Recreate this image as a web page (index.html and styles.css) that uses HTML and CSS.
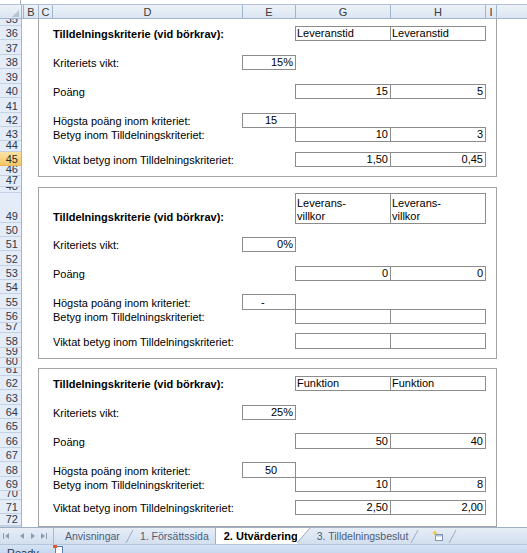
FILE: index.html
```html
<!DOCTYPE html>
<html lang="sv">
<head>
<meta charset="utf-8">
<title>2. Utvärdering</title>
<link rel="stylesheet" href="styles.css">
</head>
<body>
<div class="app">
  <div class="topstrip"><div class="namebox"></div></div>

  <div class="colheads">
    <div class="ch corner"><svg class="selall" width="7" height="7" viewBox="0 0 7 7"><polygon points="7,0 7,7 0,7" fill="#b7c3d3"/></svg></div>
    <div class="ch hid"></div>
    <div class="ch">B</div>
    <div class="ch sep">C</div>
    <div class="ch sep">D</div>
    <div class="ch sep">E</div>
    <div class="ch sep">G</div>
    <div class="ch sep">H</div>
    <div class="ch sep">I</div>
    <div class="ch sep"></div>
  </div>

  <div class="sheet">
    <div class="rowheads">
      <div class="rh h7">35</div>
      <div class="rh h14">36</div>
      <div class="rh h15">37</div>
      <div class="rh h14">38</div>
      <div class="rh h15">39</div>
      <div class="rh h14">40</div>
      <div class="rh h15">41</div>
      <div class="rh h14">42</div>
      <div class="rh h14">43</div>
      <div class="rh h11">44</div>
      <div class="rh h14 sel">45</div>
      <div class="rh h10">46</div>
      <div class="rh h11">47</div>
      <div class="rh h6">48</div>
      <div class="rh h30">49</div>
      <div class="rh h14">50</div>
      <div class="rh h14">51</div>
      <div class="rh h15">52</div>
      <div class="rh h14">53</div>
      <div class="rh h14">54</div>
      <div class="rh h15">55</div>
      <div class="rh h14">56</div>
      <div class="rh h10">57</div>
      <div class="rh h15">58</div>
      <div class="rh h10">59</div>
      <div class="rh h10">60</div>
      <div class="rh h8">61</div>
      <div class="rh h14">62</div>
      <div class="rh h15">63</div>
      <div class="rh h14">64</div>
      <div class="rh h14">65</div>
      <div class="rh h15">66</div>
      <div class="rh h14">67</div>
      <div class="rh h15">68</div>
      <div class="rh h14">69</div>
      <div class="rh h9">70</div>
      <div class="rh h14">71</div>
      <div class="rh h12">72</div>
      <div class="rh h1">73</div>
    </div>

    <div class="canvas">
      <section class="card cut">
        <div class="r h7"></div>
        <div class="r h14">
          <div class="lbl bold">Tilldelningskriterie (vid börkrav):</div>
          <div class="box cg">Leveranstid</div>
          <div class="box chh">Leveranstid</div>
        </div>
        <div class="r h15"></div>
        <div class="r h14">
          <div class="lbl">Kriteriets vikt:</div>
          <div class="box ce num">15%</div>
        </div>
        <div class="r h15"></div>
        <div class="r h14">
          <div class="lbl">Poäng</div>
          <div class="box cg num">15</div>
          <div class="box chh num">5</div>
        </div>
        <div class="r h15"></div>
        <div class="r h14">
          <div class="lbl">Högsta poäng inom kriteriet:</div>
          <div class="box ce ind">15</div>
        </div>
        <div class="r h14">
          <div class="lbl">Betyg inom Tilldelningskriteriet:</div>
          <div class="box cg num">10</div>
          <div class="box chh num">3</div>
        </div>
        <div class="r h11"></div>
        <div class="r h14">
          <div class="lbl">Viktat betyg inom Tilldelningskriteriet:</div>
          <div class="box cg num">1,50</div>
          <div class="box chh num">0,45</div>
        </div>
        <div class="r h10"></div>
      </section>

      <section class="card gap10">
        <div class="r h5"></div>
        <div class="r h30">
          <div class="lbl bold">Tilldelningskriterie (vid börkrav):</div>
          <div class="box cg wrap"><span>Leverans-<br>villkor</span></div>
          <div class="box chh wrap"><span>Leverans-<br>villkor</span></div>
        </div>
        <div class="r h14"></div>
        <div class="r h14">
          <div class="lbl">Kriteriets vikt:</div>
          <div class="box ce num">0%</div>
        </div>
        <div class="r h15"></div>
        <div class="r h14">
          <div class="lbl">Poäng</div>
          <div class="box cg num">0</div>
          <div class="box chh num">0</div>
        </div>
        <div class="r h14"></div>
        <div class="r h15">
          <div class="lbl">Högsta poäng inom kriteriet:</div>
          <div class="box ce dash">-</div>
        </div>
        <div class="r h14">
          <div class="lbl">Betyg inom Tilldelningskriteriet:</div>
          <div class="box cg"></div>
          <div class="box chh"></div>
        </div>
        <div class="r h10"></div>
        <div class="r h15">
          <div class="lbl">Viktat betyg inom Tilldelningskriteriet:</div>
          <div class="box cg"></div>
          <div class="box chh"></div>
        </div>
        <div class="r h10"></div>
      </section>

      <section class="card gap9">
        <div class="r h7"></div>
        <div class="r h14">
          <div class="lbl bold">Tilldelningskriterie (vid börkrav):</div>
          <div class="box cg">Funktion</div>
          <div class="box chh">Funktion</div>
        </div>
        <div class="r h15"></div>
        <div class="r h14">
          <div class="lbl">Kriteriets vikt:</div>
          <div class="box ce num">25%</div>
        </div>
        <div class="r h14"></div>
        <div class="r h15">
          <div class="lbl">Poäng</div>
          <div class="box cg num">50</div>
          <div class="box chh num">40</div>
        </div>
        <div class="r h14"></div>
        <div class="r h15">
          <div class="lbl">Högsta poäng inom kriteriet:</div>
          <div class="box ce ind">50</div>
        </div>
        <div class="r h14">
          <div class="lbl">Betyg inom Tilldelningskriteriet:</div>
          <div class="box cg num">10</div>
          <div class="box chh num">8</div>
        </div>
        <div class="r h9"></div>
        <div class="r h14">
          <div class="lbl">Viktat betyg inom Tilldelningskriteriet:</div>
          <div class="box cg num">2,50</div>
          <div class="box chh num">2,00</div>
        </div>
        <div class="r h12"></div>
      </section>
    </div>
  </div>

  <div class="tabbar">
    <div class="nav">
      <svg width="53" height="16" viewBox="0 0 53 16">
        <g fill="#8d9bb0">
          <rect x="3" y="5" width="1" height="6"/>
          <polygon points="5,8 9,5 9,11"/>
          <polygon points="20,8 24,5 24,11"/>
          <polygon points="31,5 31,11 35,8"/>
          <polygon points="41,5 41,11 45,8"/>
          <rect x="46" y="5" width="1" height="6"/>
        </g>
      </svg>
    </div>
    <div class="tab t1">Anvisningar</div>
    <svg class="slash" width="10" height="16" viewBox="0 0 10 16"><line x1="1" y1="15" x2="8" y2="2" stroke="#9aabc2" stroke-width="1"/></svg>
    <div class="tab t2">1. Försättssida</div>
    <div class="tab active">2. Utvärdering</div>
    <svg class="slash-active" width="13" height="16" viewBox="0 0 13 16"><polygon points="0,0 13,0 0,15" fill="#fff"/><line x1="0" y1="15" x2="13" y2="0" stroke="#9aabc2" stroke-width="1"/></svg>
    <div class="tab t4">3. Tilldelningsbeslut</div>
    <svg class="slash" width="10" height="16" viewBox="0 0 10 16"><line x1="1" y1="15" x2="8" y2="2" stroke="#9aabc2" stroke-width="1"/></svg>
    <div class="tab tnew">
      <svg width="11" height="12" viewBox="0 0 11 12">
        <rect x="3.5" y="4.5" width="7" height="6" fill="#fff" stroke="#7f95b8"/>
        <rect x="4" y="5" width="6" height="1.5" fill="#a9bedc"/>
        <polygon points="3,0 3.8,2.2 6,3 3.8,3.8 3,6 2.2,3.8 0,3 2.2,2.2" fill="#f2c230"/>
      </svg>
    </div>
    <svg class="slash" width="10" height="16" viewBox="0 0 10 16"><line x1="1" y1="15" x2="8" y2="2" stroke="#9aabc2" stroke-width="1"/></svg>
  </div>

  <div class="status">
    <span class="ready">Ready</span>
    <svg class="macro" width="12" height="8" viewBox="0 0 12 8">
      <rect x="3.5" y="1.5" width="7" height="7" fill="#fff" stroke="#5a7fb5"/>
      <rect x="1" y="0" width="4" height="3" fill="#e0582c"/>
    </svg>
  </div>
</div>
</body>
</html>
```
FILE: styles.css
```css
* {
  box-sizing: border-box;
}

html,
body {
  margin: 0;
  padding: 0;
}

body {
  width: 527px;
  height: 553px;
  overflow: hidden;
  background: #fff;
  color: #000;
  font-family: "Liberation Sans", Arial, sans-serif;
  font-size: 11px;
}

.app {
  width: 527px;
  height: 553px;
  display: flex;
  flex-direction: column;
}

/* ---------- top strip (bottom of formula bar) ---------- */
.topstrip {
  height: 5px;
  flex: none;
  display: flex;
  background: #fff;
  border-bottom: 1px solid #b3c2d6;
}

.namebox {
  width: 21px;
  height: 4px;
  border-right: 1px solid #a4b1c2;
}

/* ---------- column headers ---------- */
.colheads {
  height: 14px;
  flex: none;
  display: grid;
  grid-template-columns: 22px 2px 14px 14px 190px 53px 95px 95px 11px 1fr;
  background: linear-gradient(#edf2f9, #dbe5f1);
  border-bottom: 1px solid #9eb6ce;
}

.ch {
  padding-top: 1px;
  line-height: 12px;
  text-align: center;
  color: #3a3a3a;
  overflow: hidden;
}

.ch.sep {
  border-left: 1px solid #9eb6ce;
}

.corner {
  border-right: 1px solid #9eb6ce;
  display: flex;
  justify-content: flex-end;
  align-items: flex-end;
  padding: 0 2px 1px 0;
}

.hid {
  border-right: 1px solid #9eb6ce;
}

/* ---------- sheet ---------- */
.sheet {
  height: 508px;
  flex: none;
  display: flex;
  overflow: hidden;
}

.rowheads {
  width: 22px;
  flex: none;
  display: flex;
  flex-direction: column;
  background: #e4ecf7;
  border-right: 1px solid #9eb6ce;
}

.rh {
  flex: none;
  display: flex;
  align-items: flex-end;
  justify-content: flex-end;
  padding-right: 3px;
  line-height: 12px;
  color: #30394a;
  border-bottom: 1px solid #c3d1e3;
  overflow: hidden;
}

.rh.sel {
  background: linear-gradient(#fbe3a4, #f4c766);
  border-bottom-color: #e8b75a;
  color: #2e2e2e;
}

.h1 { height: 1px; }
.h5 { height: 5px; }
.h6 { height: 6px; }
.h7 { height: 7px; }
.h8 { height: 8px; }
.h9 { height: 9px; }
.h10 { height: 10px; }
.h11 { height: 11px; }
.h12 { height: 12px; }
.h14 { height: 14px; }
.h15 { height: 15px; }
.h30 { height: 30px; }

.canvas {
  flex: 1;
  padding-left: 16px;
}

/* ---------- criterion cards ---------- */
.card {
  width: 459px;
  border: 1px solid #a3a3a3;
  padding: 0 11px 0 13px;
}

.card.cut {
  border-top: none;
}

.gap10 {
  margin-top: 10px;
}

.gap9 {
  margin-top: 9px;
}

.r {
  display: grid;
  grid-template-columns: 190px 53px 95px 95px;
}

.lbl {
  grid-row: 1;
  grid-column: 1;
  align-self: end;
  padding-left: 1px;
  line-height: 12px;
  white-space: nowrap;
}

.bold {
  font-weight: bold;
}

.box {
  grid-row: 1;
  margin: 0 -1px -1px 0;
  border: 1px solid #8c8c8c;
  display: flex;
  align-items: flex-end;
  padding: 0 2px 0 1px;
  line-height: 13px;
  white-space: nowrap;
  overflow: hidden;
}

.box.num {
  justify-content: flex-end;
}

.box.ind {
  padding-left: 22px;
}

.box.dash {
  padding-left: 18px;
}

.box.wrap {
  white-space: normal;
}

.ce { grid-column: 2; }
.cg { grid-column: 3; }
.chh { grid-column: 4; }

/* ---------- sheet tabs ---------- */
.tabbar {
  height: 17px;
  flex: none;
  display: flex;
  align-items: stretch;
  background: linear-gradient(#e6edf7, #d3dfee);
  border-top: 1px solid #9eb0c8;
}

.nav {
  width: 54px;
  flex: none;
  border-right: 1px solid #a9b9cf;
}

.nav svg {
  display: block;
}

.tab {
  flex: none;
  display: flex;
  align-items: center;
  line-height: 16px;
  font-size: 10.5px;
  color: #4d5d77;
  white-space: nowrap;
}

.slash,
.slash-active {
  flex: none;
  display: block;
}

.t1 {
  padding: 0 5px 0 11px;
}

.t2 {
  padding: 0 6px 0 5px;
}

.active {
  padding-left: 8px;
  background: #fff;
  border-left: 1px solid #9eb0c8;
  font-size: 11px;
  font-weight: bold;
  color: #000;
}

.slash-active {
  margin-left: -1px;
}

.t4 {
  padding: 0 2px 0 7px;
}

.tnew {
  padding: 0 5px 0 12px;
}

.tnew svg {
  display: block;
}

/* ---------- status bar ---------- */
.status {
  height: 9px;
  flex: none;
  display: flex;
  align-items: flex-start;
  gap: 13px;
  padding-left: 7px;
  background: linear-gradient(#d6e3f4, #c7d8ee);
  border-top: 1px solid #b5c7df;
  overflow: hidden;
}

.ready {
  margin-top: 2px;
  line-height: 12px;
  color: #26364f;
}

.macro {
  display: block;
  flex: none;
}
```
